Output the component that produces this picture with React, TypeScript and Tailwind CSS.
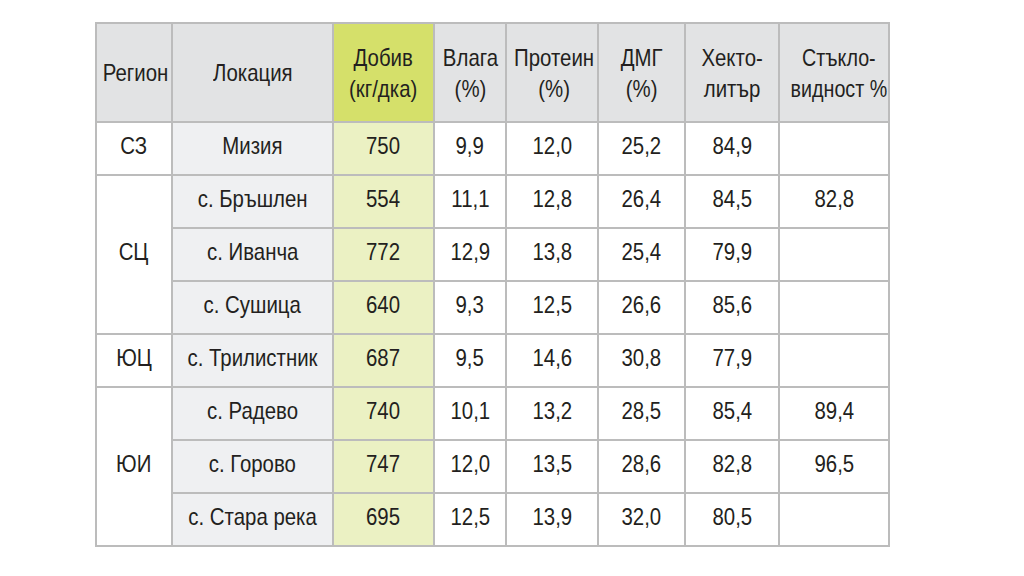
const rows = [
  { region: "СЗ", span: 1, loc: "Мизия", y: "750", v: "9,9", p: "12,0", d: "25,2", h: "84,9", s: "" },
  { region: "СЦ", span: 3, loc: "с. Бръшлен", y: "554", v: "11,1", p: "12,8", d: "26,4", h: "84,5", s: "82,8" },
  { region: null, span: 0, loc: "с. Иванча", y: "772", v: "12,9", p: "13,8", d: "25,4", h: "79,9", s: "" },
  { region: null, span: 0, loc: "с. Сушица", y: "640", v: "9,3", p: "12,5", d: "26,6", h: "85,6", s: "" },
  { region: "ЮЦ", span: 1, loc: "с. Трилистник", y: "687", v: "9,5", p: "14,6", d: "30,8", h: "77,9", s: "" },
  { region: "ЮИ", span: 3, loc: "с. Радево", y: "740", v: "10,1", p: "13,2", d: "28,5", h: "85,4", s: "89,4" },
  { region: null, span: 0, loc: "с. Горово", y: "747", v: "12,0", p: "13,5", d: "28,6", h: "82,8", s: "96,5" },
  { region: null, span: 0, loc: "с. Стара река", y: "695", v: "12,5", p: "13,9", d: "32,0", h: "80,5", s: "" },
];

const cell = "border-2 border-[#bcbcbc] text-center align-middle p-0 whitespace-nowrap";
const body = `${cell} pb-[5px]`;

// the source font is a tall, narrow grotesque, so squeeze Liberation Sans a bit
function T({ children }: { children: React.ReactNode }) {
  return <span className="inline-block scale-x-[0.85]">{children}</span>;
}

export default function App() {
  return (
    <div
      lang="bg"
      className="w-[1024px] h-[576px] bg-white pl-[95px] pt-[22px] text-[#231f20] text-[24px]"
      style={{ fontFamily: '"Liberation Sans", Arial, sans-serif' }}
    >
      <table className="table-fixed border-collapse w-[793px]">
        <colgroup>
          <col className="w-[76px]" />
          <col className="w-[161px]" />
          <col className="w-[101px]" />
          <col className="w-[72px]" />
          <col className="w-[92px]" />
          <col className="w-[87px]" />
          <col className="w-[94px]" />
          <col className="w-[110px]" />
        </colgroup>
        <thead>
          <tr className="h-[99px] bg-[#e2e3e4] leading-[31px]">
            <th className={`${cell} font-normal`}>
              <T>Регион</T>
            </th>
            <th className={`${cell} font-normal`}>
              <T>Локация</T>
            </th>
            <th className={`${cell} font-normal bg-[#d5e06a]`}>
              <T>
                Добив
                <br />
                (кг/дка)
              </T>
            </th>
            <th className={`${cell} font-normal`}>
              <T>
                Влага
                <br />
                (%)
              </T>
            </th>
            <th className={`${cell} font-normal`}>
              <T>
                Протеин
                <br />
                (%)
              </T>
            </th>
            <th className={`${cell} font-normal`}>
              <T>
                ДМГ
                <br />
                (%)
              </T>
            </th>
            <th className={`${cell} font-normal`}>
              <T>
                Хекто-
                <br />
                литър
              </T>
            </th>
            <th className={`${cell} font-normal`}>
              <span className="inline-block scale-x-[0.82]">
                Стъкло-
                <br />
                видност %
              </span>
            </th>
          </tr>
        </thead>
        <tbody>
          {rows.map((r) => (
            <tr key={r.loc} className="h-[53px]">
              {r.region && (
                <td rowSpan={r.span} className={body}>
                  <T>{r.region}</T>
                </td>
              )}
              <td className={`${body} bg-[#eff0f2]`}>
                <T>{r.loc}</T>
              </td>
              <td className={`${body} bg-[#ebf1c3]`}>
                <T>{r.y}</T>
              </td>
              <td className={body}>
                <T>{r.v}</T>
              </td>
              <td className={body}>
                <T>{r.p}</T>
              </td>
              <td className={body}>
                <T>{r.d}</T>
              </td>
              <td className={body}>
                <T>{r.h}</T>
              </td>
              <td className={body}>
                <T>{r.s}</T>
              </td>
            </tr>
          ))}
        </tbody>
      </table>
    </div>
  );
}
